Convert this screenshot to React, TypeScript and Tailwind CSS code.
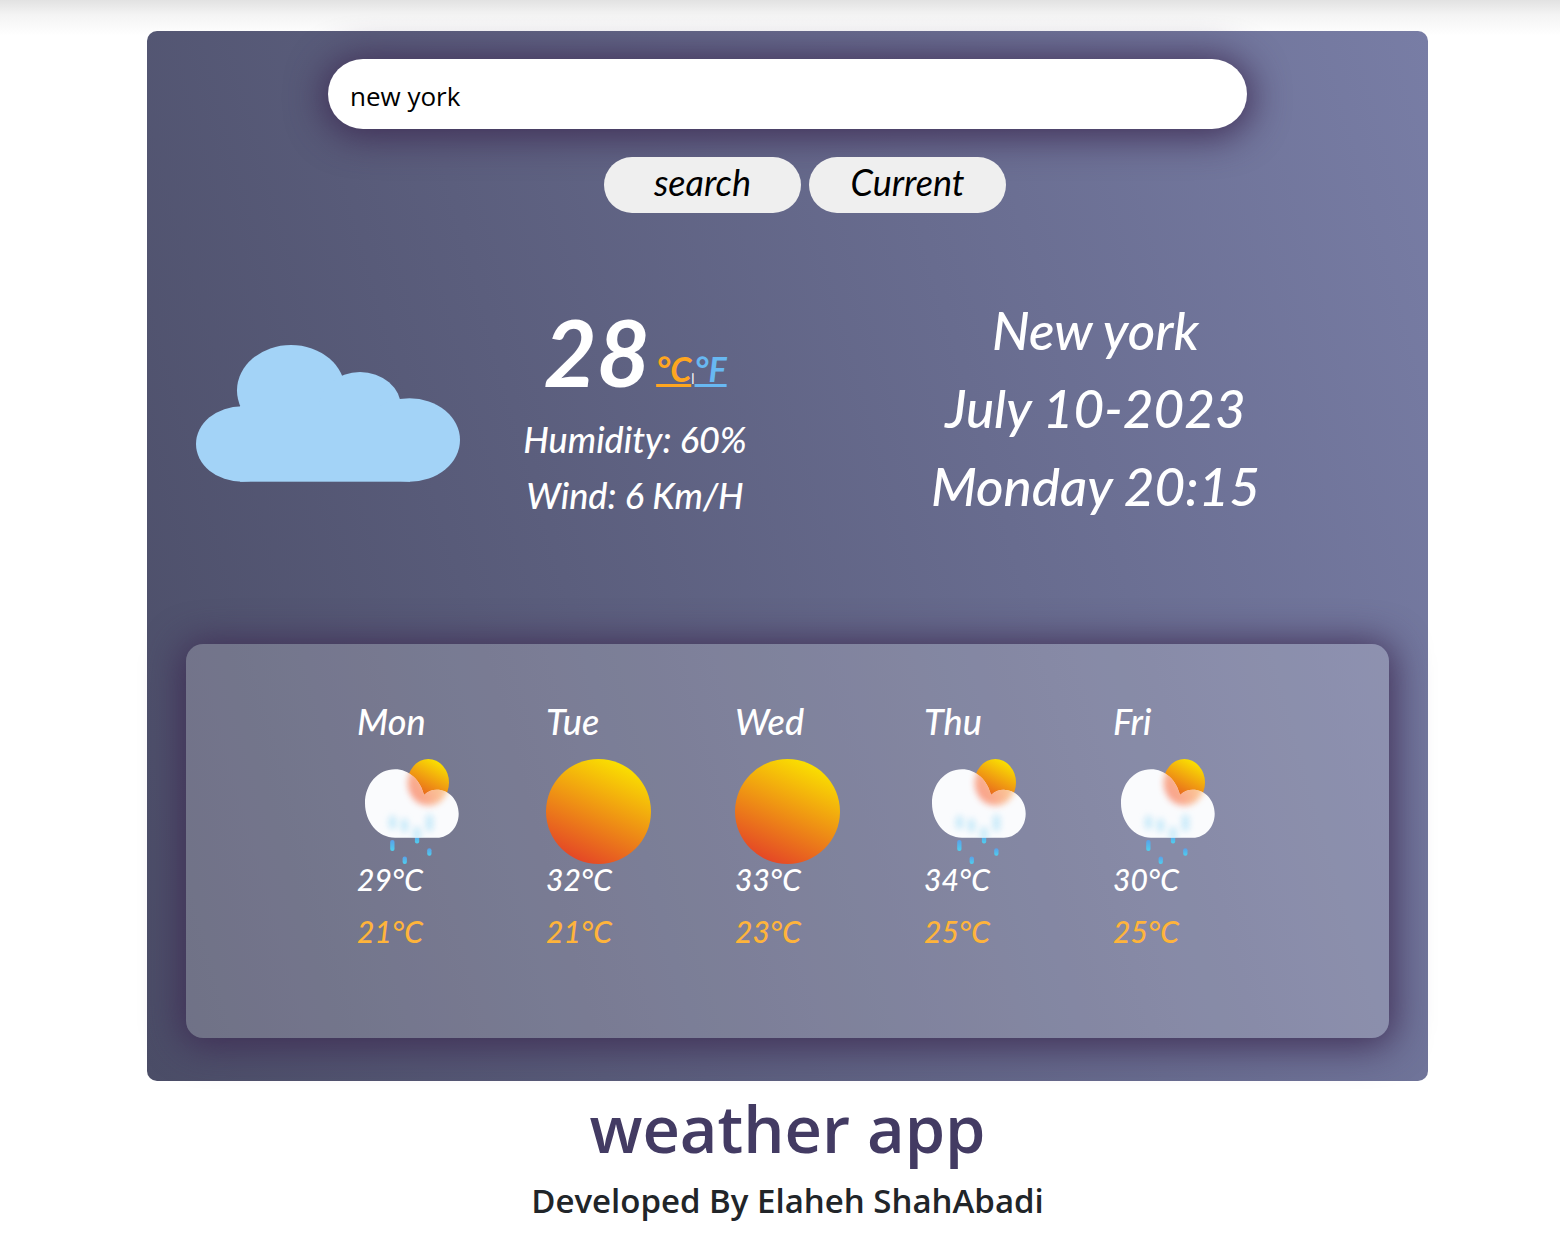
import { useState } from "react";

type Kind = "rain" | "sun";

const forecast: { day: string; kind: Kind; high: number; low: number }[] = [
  { day: "Mon", kind: "rain", high: 29, low: 21 },
  { day: "Tue", kind: "sun", high: 32, low: 21 },
  { day: "Wed", kind: "sun", high: 33, low: 23 },
  { day: "Thu", kind: "rain", high: 34, low: 25 },
  { day: "Fri", kind: "rain", high: 30, low: 25 },
];

function CloudIcon() {
  return (
    <svg viewBox="0 0 264 137" className="w-[264px] shrink-0" fill="#a3d3f7" role="img" aria-label="Cloudy">
      <ellipse cx="95" cy="45.5" rx="54" ry="45.5" />
      <ellipse cx="164" cy="62" rx="41" ry="35" />
      <ellipse cx="213.5" cy="95" rx="50.5" ry="41.7" />
      <ellipse cx="46" cy="99" rx="46" ry="37.7" />
      <rect x="44" y="61" width="170" height="75.7" />
    </svg>
  );
}

function SunIcon({ id }: { id: string }) {
  return (
    <svg viewBox="0 0 105 105" className="size-[105px]" role="img" aria-label="Sunny">
      <defs>
        <linearGradient id={`${id}-s`} x1="0.28" y1="0.98" x2="0.72" y2="0.02">
          <stop offset="0" stopColor="#e44427" />
          <stop offset="1" stopColor="#fae300" />
        </linearGradient>
      </defs>
      <circle cx="52.5" cy="52.5" r="52.5" fill={`url(#${id}-s)`} />
    </svg>
  );
}

function RainIcon({ id }: { id: string }) {
  return (
    <svg viewBox="0 0 105 105" className="size-[105px]" role="img" aria-label="Showers">
      <defs>
        <linearGradient id={`${id}-s`} x1="0.28" y1="0.98" x2="0.72" y2="0.02">
          <stop offset="0" stopColor="#e44427" />
          <stop offset="1" stopColor="#fae300" />
        </linearGradient>
        <linearGradient id={`${id}-g`} x1="0.2" y1="0.9" x2="0.9" y2="0.4">
          <stop offset="0" stopColor="#f8866a" />
          <stop offset="1" stopColor="#fcc983" />
        </linearGradient>
        <linearGradient id={`${id}-d`} x1="0" y1="0" x2="0" y2="1">
          <stop offset="0" stopColor="#5a9fe8" />
          <stop offset="1" stopColor="#4fd0ee" />
        </linearGradient>
        <clipPath id={`${id}-c`}>
          <path d="M38 78.7C21 78.7 8 63 8 44.300C8 25 21 10.200 38 10.200C52 10.200 63.500 21 67 36C70.500 32.500 75 30.700 79.700 30.700C92 30.700 101.700 41 101.700 54.700C101.700 68 92 78.700 80 78.700Z" />
        </clipPath>
        <filter id={`${id}-b`} x="-100%" y="-100%" width="300%" height="300%">
          <feGaussianBlur stdDeviation="3.2" />
        </filter>
      </defs>
      <ellipse cx="71.300" cy="23.500" rx="20.700" ry="23.500" fill={`url(#${id}-s)`} />
      <g fill={`url(#${id}-d)`}>
        <rect x="33.200" y="81" width="4.300" height="11" rx="2" />
        <rect x="45.600" y="97.500" width="4.300" height="7.500" rx="2" />
        <rect x="57.900" y="76" width="4.300" height="8.500" rx="2" />
        <rect x="70.200" y="89.300" width="4.300" height="7.500" rx="2" />
      </g>
      <g clipPath={`url(#${id}-c)`}>
        <rect width="105" height="105" fill="#fafbfd" />
        <ellipse cx="71.300" cy="24" rx="20.500" ry="22.500" fill={`url(#${id}-g)`} opacity="0.8" filter={`url(#${id}-b)`} />
        <g fill="#b5e4f8" opacity="0.75" filter={`url(#${id}-b)`}>
          <rect x="32" y="57" width="7" height="13" rx="3" />
          <rect x="44" y="60" width="7" height="13" rx="3" />
          <rect x="56.500" y="68" width="7" height="14" rx="3" />
          <rect x="69" y="56" width="7" height="16" rx="3" />
        </g>
      </g>
    </svg>
  );
}

export default function App() {
  const [city, setCity] = useState("new york");

  return (
    <div className="min-h-screen bg-[linear-gradient(to_bottom,#e2e2e2_0,#f4f4f4_15px,#ffffff_36px)] pt-[31px] pl-[15px] font-['Open_Sans',sans-serif]">
      <main className="mx-auto w-full max-w-[1281px] rounded-[10px] bg-[linear-gradient(74deg,#4b4d67,#787da5)] px-[39px] pt-7 pb-[43px] font-['Lato',sans-serif] text-white italic">
        <form onSubmit={(e) => e.preventDefault()}>
          <input
            type="text"
            aria-label="City"
            value={city}
            onChange={(e) => setCity(e.target.value)}
            className="mx-auto block h-[70px] w-full max-w-[919px] rounded-full bg-white px-[22px] pt-1 font-['Open_Sans',sans-serif] text-[26px] text-black not-italic shadow-[0_3px_36px_5px_rgba(62,44,84,0.95)] outline-none"
          />
          <div className="relative mt-7 flex justify-center gap-2 pl-[35px] text-[36px] leading-[50px] text-black">
            <button type="submit" className="h-14 w-[197px] rounded-full bg-[#efefef] pb-1.5">
              search
            </button>
            <button type="button" className="h-14 w-[197px] rounded-full bg-[#efefef] pb-1.5">
              Current
            </button>
          </div>
        </form>

        <section className="mt-[78px] flex h-[234px] items-start pl-[10px] font-medium">
          <div className="pt-[54px]">
            <CloudIcon />
          </div>
          <div className="flex w-[350px] flex-col items-center pt-1.5">
            <p className="h-[110px] text-[92px] leading-[110px] font-bold">
              28
              <span className="ml-1.5 align-[5px] text-[12px] leading-none">
                <a href="#celsius" className="text-[34px] text-[#ffa61f] underline">
                  °C
                </a>
                |
                <a href="#fahrenheit" className="text-[34px] text-[#68b8f2] underline">
                  °F
                </a>
              </span>
            </p>
            <p className="mt-1 text-[36px] leading-14">Humidity: 60%</p>
            <p className="text-[36px] leading-14">Wind: 6 Km/H</p>
          </div>
          <div className="flex-1 pr-2 text-center text-[53px] leading-[78px]">
            <p>New york</p>
            <p>July 10-2023</p>
            <p>Monday 20:15</p>
          </div>
        </section>

        <section className="mt-[119px] flex h-[394px] rounded-[17px] bg-white/20 pt-[49px] pr-[87px] pl-[171px] font-medium shadow-[0_3px_36px_5px_rgba(62,44,84,0.95)]">
          {forecast.map((f) => (
            <article key={f.day} className="flex-1">
              <h2 className="text-[36px] leading-[56px]">{f.day}</h2>
              <div className="mt-[10px] h-[102px]">
                {f.kind === "rain" ? <RainIcon id={f.day} /> : <SunIcon id={f.day} />}
              </div>
              <p className="text-[30px] leading-[36px]">{f.high}°C</p>
              <p className="mt-4 text-[30px] leading-[36px] text-[#ffb43a]">{f.low}°C</p>
            </article>
          ))}
        </section>
      </main>

      <footer className="text-center font-semibold">
        <h1 className="mt-1 text-[65px] leading-[86px] text-[#433b63]">weather app</h1>
        <p className="mt-2 text-[33px] leading-[44px] text-[#212529]">Developed By Elaheh ShahAbadi</p>
      </footer>
    </div>
  );
}
